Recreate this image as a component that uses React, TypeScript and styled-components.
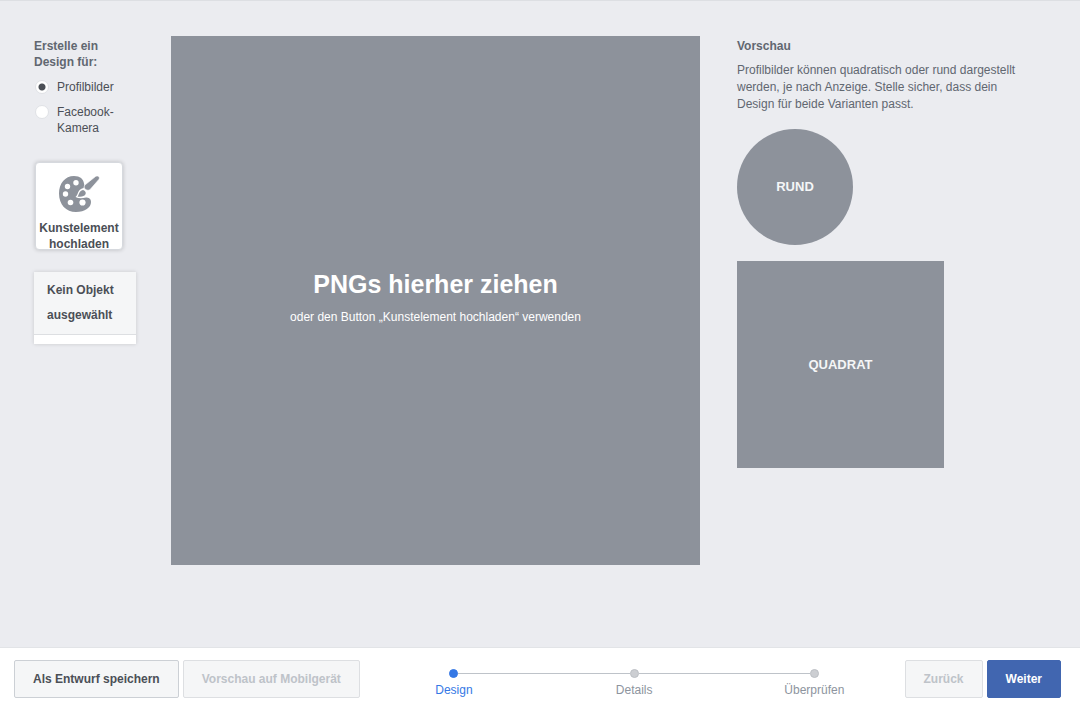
import React, { useState } from "react";
import styled, { createGlobalStyle } from "styled-components";

const GlobalStyle = createGlobalStyle`
  *, *::before, *::after { box-sizing: border-box; }
  body {
    margin: 0;
    background: #ebecf0;
    color: #4b4f56;
    font-family: "Liberation Sans", Arial, sans-serif;
    font-size: 12px;
    line-height: 16px;
  }
  h1, h2, p, fieldset, legend { margin: 0; padding: 0; border: 0; }
`;

const Page = styled.div`
  display: flex;
  flex-direction: column;
  min-height: 100vh;
  border-top: 1px solid #dddfe3;
`;

const Workspace = styled.main`
  flex: 1;
  display: grid;
  grid-template-columns: 102px minmax(0, 529fr) minmax(0, 311fr);
  column-gap: 35px;
  align-items: start;
  padding: 35px 34px;
`;

const Sidebar = styled.aside`
  display: flex;
  flex-direction: column;
  align-items: flex-start;
  padding-top: 2px;
`;

const Choices = styled.fieldset`
  min-width: 0;
`;

const Legend = styled.legend`
  width: 80px;
  color: #616770;
  font-weight: bold;
`;

const Choice = styled.label`
  display: flex;
  align-items: flex-start;
  gap: 8px;
  margin-top: 9px;
`;

const Radio = styled.input`
  appearance: none;
  flex: none;
  width: 14px;
  height: 14px;
  margin: 1px 0 0 1px;
  border: 1px solid #e0e2e6;
  border-radius: 50%;
  background: #fff;

  &:checked {
    background: radial-gradient(circle, #4b4f56 3px, #fff 4px);
  }
`;

const UploadButton = styled.button`
  display: flex;
  flex-direction: column;
  align-items: center;
  gap: 7px;
  width: 88px;
  height: 88px;
  margin: 26px 1px 0;
  padding: 12px 0 0;
  border: 1px solid #d6d9de;
  border-radius: 4px;
  background: #fff;
  box-shadow: 0 0 4px rgba(0, 0, 0, 0.2);
  color: #4b4f56;
  font: bold 12px/16px "Liberation Sans", Arial, sans-serif;
`;

const Inspector = styled.section`
  width: 102px;
  margin-top: 22px;
  border-bottom: 9px solid #fff;
  background: #f5f6f7;
  box-shadow: 0 0 4px rgba(0, 0, 0, 0.15);
`;

const InspectorText = styled.p`
  padding: 6px 13px;
  border-bottom: 1px solid #dddfe2;
  font-weight: bold;
  line-height: 25px;
`;

const Canvas = styled.section`
  display: flex;
  flex-direction: column;
  align-items: center;
  justify-content: center;
  gap: 9px;
  aspect-ratio: 1;
  padding-bottom: 8px;
  background: #8d929b;
  color: #fff;
  text-align: center;
`;

const CanvasTitle = styled.h1`
  font-size: 25px;
  line-height: 32px;
`;

const Preview = styled.section`
  padding: 2px 16px 0 2px;
  color: #616770;
`;

const PreviewTitle = styled.h2`
  font-size: 12px;
`;

const PreviewText = styled.p`
  margin: 8px 0 16px;
  line-height: 17px;
`;

const Shape = styled.div<{ $size: number; $round?: boolean }>`
  display: flex;
  align-items: center;
  justify-content: center;
  width: ${(p) => p.$size}px;
  max-width: 100%;
  aspect-ratio: 1;
  margin-bottom: 16px;
  border-radius: ${(p) => (p.$round ? "50%" : "0")};
  background: #8d929b;
  color: #f5f6f7;
  font-size: 13px;
  font-weight: bold;
`;

const Footer = styled.footer`
  display: flex;
  align-items: center;
  padding: 12px 19px 10px 14px;
  border-top: 1px solid #e2e4e7;
  background: #fff;
`;

const ButtonGroup = styled.div`
  display: flex;
  gap: 4px;
`;

const Button = styled.button<{ $primary?: boolean }>`
  height: 38px;
  padding: 0 18px;
  border: 1px solid ${(p) => (p.$primary ? "#4166b0" : "#ccd0d5")};
  border-radius: 2px;
  background: ${(p) => (p.$primary ? "#4166b0" : "#f5f6f7")};
  color: ${(p) => (p.$primary ? "#fff" : "#4b4f56")};
  font: bold 12px/16px "Liberation Sans", Arial, sans-serif;
  white-space: nowrap;

  &:disabled {
    border-color: #dddfe2;
    color: #bec3c9;
  }
`;

const Steps = styled.ol`
  flex: 1;
  display: flex;
  margin: 0;
  padding: 8px 0 0 4px;
  list-style: none;
`;

const Step = styled.li<{ $active?: boolean }>`
  flex: 1;
  display: flex;
  flex-direction: column;
  gap: 4px;
  color: ${(p) => (p.$active ? "#3578e5" : "#8d949e")};
  text-align: center;
`;

const Track = styled.span`
  display: flex;
  align-items: center;
`;

const Line = styled.span<{ $hidden: boolean }>`
  flex: 1;
  height: 1px;
  background: ${(p) => (p.$hidden ? "transparent" : "#bec3c9")};
`;

const Dot = styled.span<{ $active: boolean }>`
  width: 9px;
  height: 9px;
  border: 1px solid ${(p) => (p.$active ? "#3578e5" : "#bcbfc4")};
  border-radius: 50%;
  background: ${(p) => (p.$active ? "#3578e5" : "#ccced2")};
`;

const IconSvg = styled.svg`
  flex: none;
`;

function PaletteIcon() {
  return (
    <IconSvg width="42" height="38" viewBox="0 0 42 38" aria-hidden="true">
      <path
        d="M16 1C7 1 1 8.500 1 18.500C1 29.500 8 37 18 37C27 37 33 32.500 33 27C33 23.500 30.500 22.500 28 22.500C24 23.500 20.500 23.500 17.500 22C20.500 20 19 14.500 25.500 13C26.500 11.500 26.500 10.500 26 8.500C25.500 4 22 1 16 1Z"
        fill="#8d929b"
      />
      <path d="M19.500 21.500C21.500 19.500 20.500 16 25 15C28.500 16 28.500 19.500 26 20.800C24 21.800 21.500 21.900 19.500 21.500Z" fill="#8d929b" />
      <path
        d="M27.500 9.500L37.500 1.500C39.800 -.2 42.500 2.200 40.800 4.500L32.300 14.300C29.500 17 23.500 13 27.500 9.500Z"
        fill="#8d929b"
        stroke="#fff"
        strokeWidth=".6"
      />
      <g fill="#fff">
        <circle cx="18" cy="7.700" r="2.700" />
        <circle cx="9.500" cy="11.500" r="2.700" />
        <circle cx="7.500" cy="19" r="2.700" />
        <circle cx="12.500" cy="27.500" r="2.800" />
        <circle cx="24.500" cy="27.500" r="3.100" />
      </g>
    </IconSvg>
  );
}

const steps = ["Design", "Details", "Überprüfen"];

export default function App() {
  const [target, setTarget] = useState("profile");

  return (
    <Page>
      <GlobalStyle />
      <Workspace>
        <Sidebar>
          <Choices>
            <Legend>Erstelle ein Design für:</Legend>
            <Choice>
              <Radio type="radio" name="target" checked={target === "profile"} onChange={() => setTarget("profile")} />
              Profilbilder
            </Choice>
            <Choice>
              <Radio type="radio" name="target" checked={target === "camera"} onChange={() => setTarget("camera")} />
              Facebook-Kamera
            </Choice>
          </Choices>
          <UploadButton type="button">
            <PaletteIcon />
            Kunstelement hochladen
          </UploadButton>
          <Inspector>
            <InspectorText>Kein Objekt ausgewählt</InspectorText>
          </Inspector>
        </Sidebar>
        <Canvas>
          <CanvasTitle>PNGs hierher ziehen</CanvasTitle>
          <p>oder den Button „Kunstelement hochladen“ verwenden</p>
        </Canvas>
        <Preview>
          <PreviewTitle>Vorschau</PreviewTitle>
          <PreviewText>
            Profilbilder können quadratisch oder rund dargestellt werden, je nach Anzeige. Stelle sicher, dass dein
            Design für beide Varianten passt.
          </PreviewText>
          <Shape $size={116} $round>RUND</Shape>
          <Shape $size={207}>QUADRAT</Shape>
        </Preview>
      </Workspace>
      <Footer>
        <ButtonGroup>
          <Button type="button">Als Entwurf speichern</Button>
          <Button type="button" disabled>Vorschau auf Mobilgerät</Button>
        </ButtonGroup>
        <Steps>
          {steps.map((label, i) => (
            <Step key={label} $active={i === 0}>
              <Track>
                <Line $hidden={i === 0} />
                <Dot $active={i === 0} />
                <Line $hidden={i === steps.length - 1} />
              </Track>
              {label}
            </Step>
          ))}
        </Steps>
        <ButtonGroup>
          <Button type="button" disabled>Zurück</Button>
          <Button type="button" $primary>Weiter</Button>
        </ButtonGroup>
      </Footer>
    </Page>
  );
}
